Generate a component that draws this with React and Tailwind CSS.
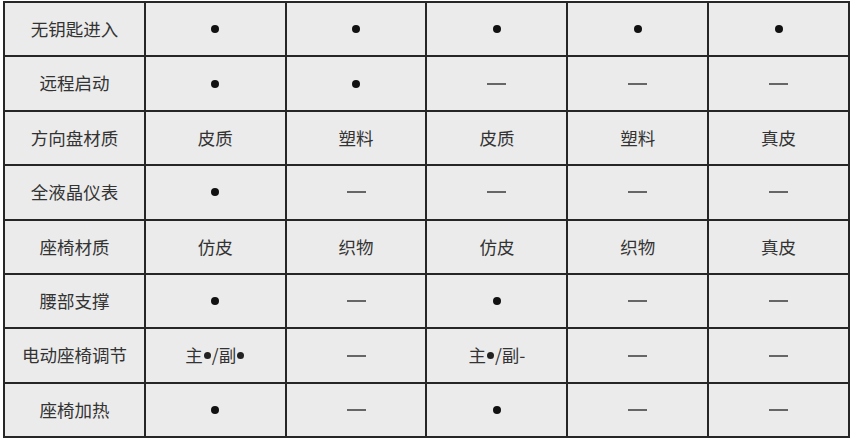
import React from 'react';

const rows = [
  ['无钥匙进入', 'dot', 'dot', 'dot', 'dot', 'dot'],
  ['远程启动', 'dot', 'dot', 'dash', 'dash', 'dash'],
  ['方向盘材质', '皮质', '塑料', '皮质', '塑料', '真皮'],
  ['全液晶仪表', 'dot', 'dash', 'dash', 'dash', 'dash'],
  ['座椅材质', '仿皮', '织物', '仿皮', '织物', '真皮'],
  ['腰部支撑', 'dot', 'dash', 'dot', 'dash', 'dash'],
  ['电动座椅调节', 'both', 'dash', 'main', 'dash', 'dash'],
  ['座椅加热', 'dot', 'dash', 'dot', 'dash', 'dash'],
];

function Dot({ small }) {
  return (
    <span
      className={
        small
          ? 'inline-block w-[7px] h-[7px] rounded-full bg-[#222] mx-[1px]'
          : 'inline-block w-[8px] h-[8px] rounded-full bg-[#111]'
      }
    />
  );
}

function CellValue({ value }) {
  if (value === 'dot') return <Dot />;
  if (value === 'dash') return <span className="block w-[19px] h-[2px] bg-[#666]" />;
  if (value === 'both')
    return (
      <span className="flex items-center">
        主<Dot small />/副<Dot small />
      </span>
    );
  if (value === 'main')
    return (
      <span className="flex items-center">
        主<Dot small />/副-
      </span>
    );
  return <span>{value}</span>;
}

export default function App() {
  return (
    <div className="w-[852px] h-[439px] bg-white pt-[1px] pl-[3px] font-['Noto_Sans_CJK_SC','Noto_Sans',sans-serif]">
      <div className="w-[847px] grid grid-cols-6 gap-[2px] p-[2px] bg-[#262626]">
        {rows.map((row, i) =>
          row.map((cell, j) => (
            <div
              key={i + '-' + j}
              className="h-[52.4px] bg-[#ebebeb] flex items-center justify-center text-[17.5px] text-[#333]"
            >
              <CellValue value={cell} />
            </div>
          ))
        )}
      </div>
    </div>
  );
}
